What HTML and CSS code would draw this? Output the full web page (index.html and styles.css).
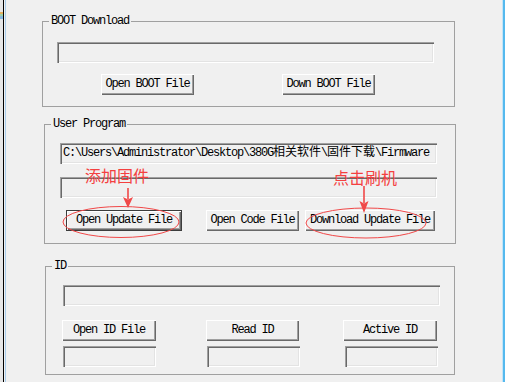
FILE: index.html
```html
<!DOCTYPE html>
<html lang="zh-CN">
<head>
    <meta charset="UTF-8">
    <meta name="viewport" content="width=device-width, initial-scale=1.0">
    <title>Firmware Download</title>
    <link rel="stylesheet" href="styles.css">
</head>
<body>
    <div class="window">
        <div class="edge-left"><span class="edge-mark"></span></div>

        <div class="dialog">
            <fieldset class="group group-boot">
                <legend>BOOT Download</legend>
                <div class="edit edit-boot"></div>
                <div class="row row-boot">
                    <button class="btn btn-open-boot">Open BOOT File</button>
                    <button class="btn btn-down-boot">Down BOOT File</button>
                </div>
            </fieldset>

            <fieldset class="group group-user">
                <legend>User Program</legend>
                <div class="edit edit-path">C:\Users\Administrator\Desktop\380G<span class="cjk">相关软件</span>\<span class="cjk">固件下载</span>\Firmware</div>
                <div class="edit edit-user"></div>
                <div class="row row-user">
                    <button class="btn btn-default btn-open-update">Open Update File</button>
                    <button class="btn btn-open-code">Open Code File</button>
                    <button class="btn btn-download">Download Update File</button>
                </div>
            </fieldset>

            <fieldset class="group group-id">
                <legend>ID</legend>
                <div class="edit edit-id"></div>
                <div class="id-cols">
                    <div class="id-col col-open">
                        <button class="btn">Open ID File</button>
                        <div class="edit edit-small"></div>
                    </div>
                    <div class="id-col col-read">
                        <button class="btn">Read ID</button>
                        <div class="edit edit-small"></div>
                    </div>
                    <div class="id-col col-active">
                        <button class="btn">Active ID</button>
                        <div class="edit edit-small"></div>
                    </div>
                </div>
            </fieldset>
        </div>

        <div class="edge-right"></div>

        <!-- red hand-drawn notes on top of the dialog -->
        <svg class="marks" width="505" height="382" viewBox="0 0 505 382">
            <g fill="none" stroke="#f04848" stroke-width="1">
                <ellipse cx="121" cy="222" rx="58" ry="15.5"/>
                <ellipse cx="366" cy="223" rx="60" ry="15"/>
            </g>
            <g stroke="#f04848" stroke-width="1.6">
                <line x1="128" y1="188" x2="128" y2="199"/>
                <line x1="364" y1="186" x2="364" y2="203"/>
            </g>
            <g fill="#f04848">
                <path d="M123 197 L128 199.5 L133 197 L128 208 Z"/>
                <path d="M359.5 201 L364 203.5 L368.5 201 L364 213 Z"/>
            </g>
        </svg>
        <span class="note note-add">添加固件</span>
        <span class="note note-flash">点击刷机</span>
    </div>
</body>
</html>
```

FILE: styles.css
```css
* {
    box-sizing: border-box;
}

body {
    margin: 0;
    background-color: #f0f0f0;
    font-family: "Liberation Mono", "Noto Sans CJK SC", monospace;
    font-size: 12px;
    letter-spacing: -1.2px;
    color: #000;
}

.window {
    position: relative;
    display: flex;
    width: 505px;
    height: 382px;
    overflow: hidden;
}

.edge-left {
    flex: none;
    width: 6px;
    background: linear-gradient(to right, #e6e6e6 0 3px, #000 3px 4px, #f0f0f0 4px 5px, #a9cdec 5px 6px);
}

.edge-mark {
    display: block;
    width: 3px;
    height: 7px;
    margin-top: 12px;
    background: linear-gradient(to bottom, #e8b060 0 2px, #9fd0a8 2px 4px, #88b8e0 4px 7px);
}

.edge-right {
    flex: none;
    width: 3px;
    background: linear-gradient(to right, #c4e4f7 0 1px, #55b9ee 1px 3px);
}

.dialog {
    flex: 1;
}

/* group boxes */
.group {
    margin: 0;
    padding: 0;
    min-width: 0;
    border: 1px solid #a0a0a0;
}

.group legend {
    margin-left: 6px;
    padding: 0 2px;
    line-height: 12px;
    height: 12px;
}

.group-boot {
    width: 413px;
    margin: 15px 0 0 36px;
    padding-bottom: 11px;
}

.group-user {
    width: 412px;
    margin: 11px 0 0 38px;
    padding-bottom: 12px;
}

.group-id {
    width: 410px;
    margin: 16px 0 0 39px;
    padding-bottom: 7px;
}

/* sunken edit boxes */
.edit {
    height: 21px;
    background-color: #f0f0f0;
    box-shadow: inset 1px 1px #a0a0a0, inset 2px 2px #696969, inset -1px -1px #fff, inset -2px -2px #e3e3e3;
    padding: 0 3px;
    line-height: 21px;
    white-space: nowrap;
    overflow: hidden;
}

.edit-boot {
    width: 377px;
    margin: 15px 0 0 14px;
}

.edit-path {
    width: 377px;
    margin: 13px 0 0 15px;
}

.edit-user {
    width: 377px;
    margin: 13px 0 0 15px;
}

.edit-id {
    width: 377px;
    margin: 13px 0 0 17px;
}

.cjk {
    letter-spacing: 0;
}

/* raised buttons */
.btn {
    display: block;
    height: 21px;
    padding: 0;
    border: none;
    background-color: #f0f0f0;
    box-shadow: inset 1px 1px #fff, inset -1px -1px #696969, inset -2px -2px #a0a0a0;
    font: inherit;
    letter-spacing: inherit;
    color: #000;
    line-height: 19px;
}

.btn-default {
    border: 1px solid #3c3c3c;
}

.row {
    display: flex;
}

.row-boot {
    margin-top: 11px;
}

.btn-open-boot {
    width: 93px;
    margin-left: 58px;
}

.btn-down-boot {
    width: 93px;
    margin-left: 88px;
}

.row-user {
    margin-top: 12px;
}

.btn-open-update {
    width: 116px;
    margin-left: 21px;
}

.btn-open-code {
    width: 93px;
    margin-left: 24px;
}

.btn-download {
    width: 130px;
    margin-left: 6px;
}

/* ID columns */
.id-cols {
    display: flex;
    margin-top: 14px;
}

.id-col .btn {
    width: 94px;
}

.col-open {
    margin-left: 16px;
}

.col-read {
    margin-left: 50px;
}

.col-read .btn {
    width: 93px;
}

.col-active {
    margin-left: 43px;
}

.edit-small {
    width: 93px;
    margin-top: 5px;
}

.col-open .edit-small,
.col-read .edit-small {
    margin-left: 1px;
}

.col-active .edit-small {
    margin-left: 2px;
}

/* annotations */
.marks {
    position: absolute;
    top: 0;
    left: 0;
    pointer-events: none;
}

.note {
    position: absolute;
    font-family: "Noto Sans CJK SC", sans-serif;
    font-size: 16px;
    line-height: 16px;
    letter-spacing: 0;
    color: #f44040;
}

.note-add {
    left: 85px;
    top: 167px;
}

.note-flash {
    left: 333px;
    top: 169px;
}
```
